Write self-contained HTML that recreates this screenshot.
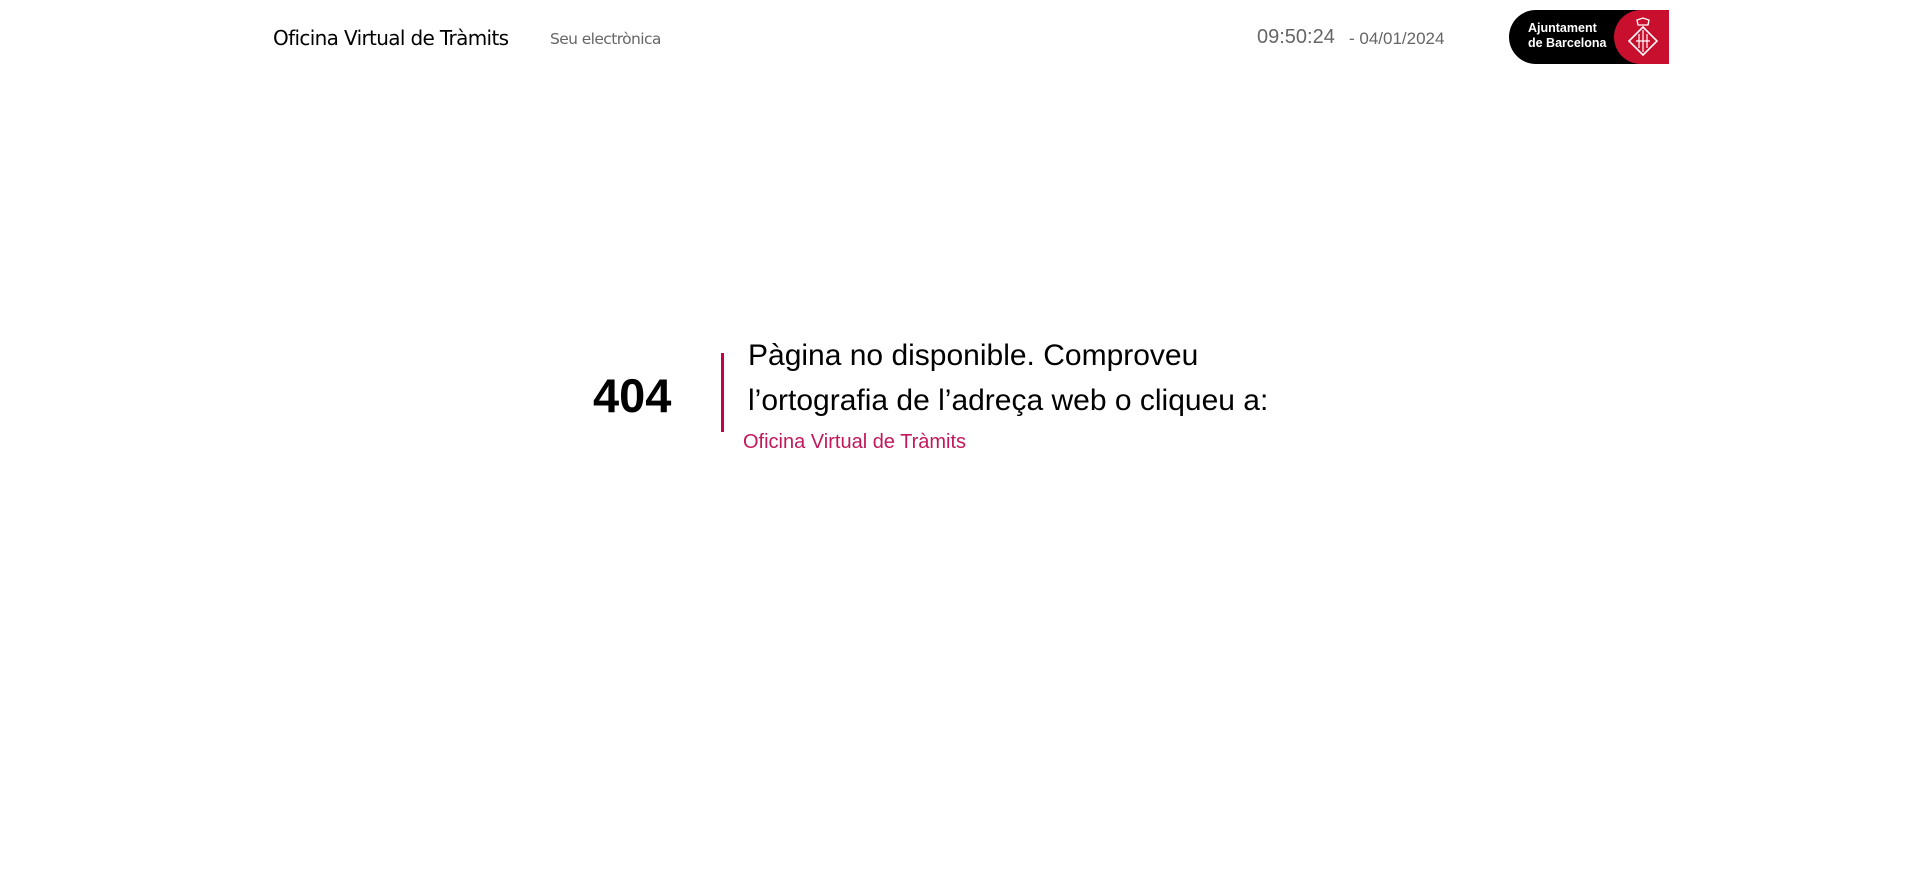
<!DOCTYPE html>
<html><head><meta charset="utf-8"><style>
body{margin:0;width:1920px;height:879px;background:#fff;font-family:"Liberation Sans",Arial,sans-serif;position:relative;overflow:hidden}
.a{position:absolute;white-space:nowrap}
</style></head><body>
<div class="a" style="left:273px;top:26px;color:#000;font-family:'DejaVu Sans',sans-serif;letter-spacing:-0.65px;font-size:20px">Oficina Virtual de Tràmits</div>
<div class="a" style="left:550px;top:30px;color:#666;font-family:'DejaVu Sans',sans-serif;letter-spacing:-0.6px;font-size:15.5px">Seu electrònica</div>
<div class="a" style="left:1257px;top:26px;font-size:20px;color:#666">09:50:24</div>
<div class="a" style="left:1349px;top:29px;font-size:17px;color:#666">- 04/01/2024</div>
<div class="a" style="left:1509px;top:10px;width:160px;height:54px;background:#000;border-radius:27px 0 0 27px;overflow:hidden">
 <div class="a" style="left:19px;top:11px;color:#fff;font-size:12.5px;font-weight:bold;line-height:15px">Ajuntament<br>de Barcelona</div>
 <div class="a" style="left:105px;top:0;width:55px;height:54px;background:#c8102e;border-radius:27px 0 0 27px"></div>
 <svg class="a" style="left:117px;top:6px" width="34" height="42" viewBox="0 0 34 42"><path d="M12 9 L22 9 L23 4 L17 2 L11 4Z" fill="none" stroke="#fff" stroke-width="1.3"/><path d="M17 11 L31 25 L17 39 L3 25Z" fill="none" stroke="#fff" stroke-width="1.6"/><path d="M17 14 V36 M10 25 H24 M13 18 V32 M21 18 V32" stroke="#fff" stroke-width="1.2"/></svg>
</div>
<div class="a" style="left:593px;top:368px;font-size:47px;font-weight:bold;color:#000">404</div>
<div class="a" style="left:721px;top:353px;width:3px;height:79px;background:#c4004b"></div>
<div class="a" style="left:748px;top:333px;font-size:30px;line-height:45px;color:#000">Pàgina no disponible. Comproveu<br>l’ortografia de l’adreça web o cliqueu a:</div>
<div class="a" style="left:743px;top:431px;font-size:20px;color:#c2185b">Oficina Virtual de Tràmits</div>
</body></html>
